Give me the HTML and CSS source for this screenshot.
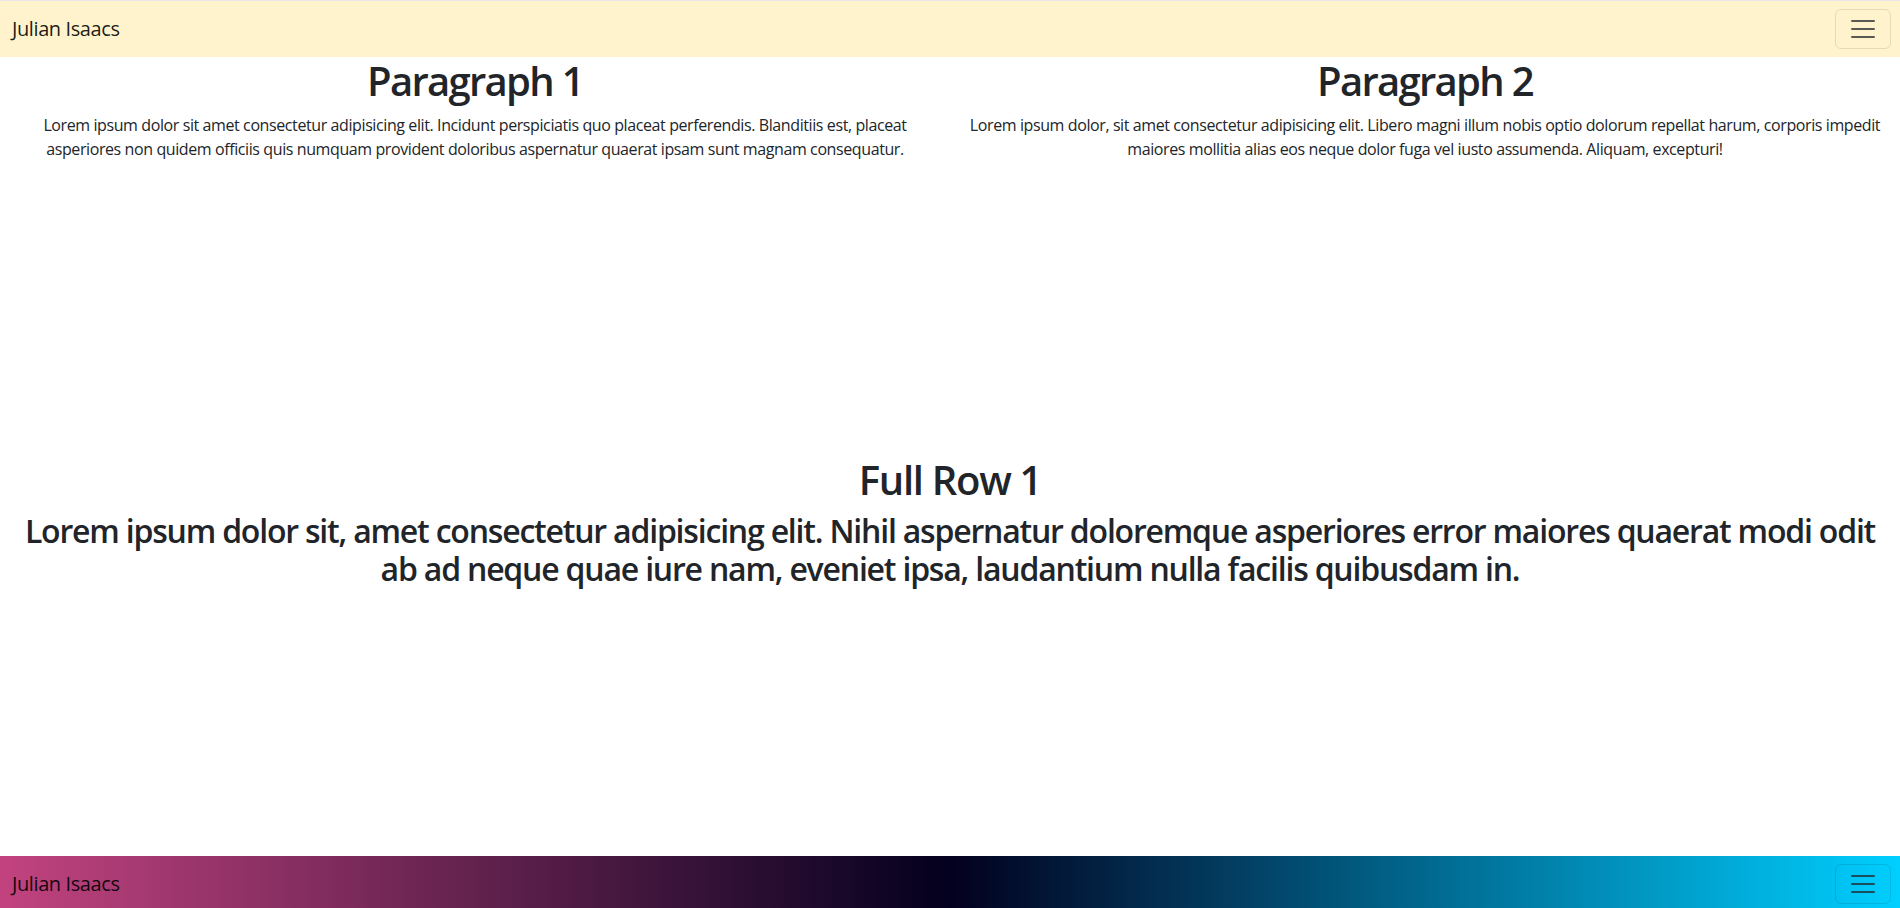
FILE: index.html
```html
<!DOCTYPE html>
<html lang="en">
<head>
<meta charset="utf-8">
<title>Julian Isaacs</title>
<link rel="stylesheet" href="styles.css">
</head>
<body>
<nav class="navbar navbar-top">
  <div class="nav-inner">
    <a class="brand" href="#">Julian Isaacs</a>
    <button class="toggler" type="button" aria-label="Toggle navigation">
      <svg class="toggler-icon" viewBox="0 0 30 30" width="30" height="30"><path d="M4 7h22M4 15h22M4 23h22"/></svg>
    </button>
  </div>
</nav>
<main class="main">
  <section class="row row-split">
    <div class="col">
      <h1 class="title">Paragraph 1</h1>
      <p class="text">Lorem ipsum dolor sit amet consectetur adipisicing elit. Incidunt perspiciatis quo placeat perferendis. Blanditiis est, placeat asperiores non quidem officiis quis numquam provident doloribus aspernatur quaerat ipsam sunt magnam consequatur.</p>
    </div>
    <div class="col">
      <h1 class="title">Paragraph 2</h1>
      <p class="text">Lorem ipsum dolor, sit amet consectetur adipisicing elit. Libero magni illum nobis optio dolorum repellat harum, corporis impedit maiores mollitia alias eos neque dolor fuga vel iusto assumenda. Aliquam, excepturi!</p>
    </div>
  </section>
  <section class="row row-full">
    <div class="col">
      <h1 class="title title-full">Full Row 1</h1>
      <h2 class="lead">Lorem ipsum dolor sit, amet consectetur adipisicing elit. Nihil aspernatur doloremque asperiores error maiores quaerat modi odit ab ad neque quae iure nam, eveniet ipsa, laudantium nulla facilis quibusdam in.</h2>
    </div>
  </section>
</main>
<nav class="navbar navbar-bottom">
  <div class="nav-inner">
    <a class="brand" href="#">Julian Isaacs</a>
    <button class="toggler" type="button" aria-label="Toggle navigation">
      <svg class="toggler-icon" viewBox="0 0 30 30" width="30" height="30"><path d="M4 7h22M4 15h22M4 23h22"/></svg>
    </button>
  </div>
</nav>
</body>
</html>
```
FILE: styles.css
```css
html, body {
  margin: 0;
  padding: 0;
  height: 908px;
  overflow: hidden;
}
body {
  font-family: "Open Sans", "Noto Sans", sans-serif;
  font-size: 16px;
  line-height: 1.5;
  color: #212529;
  background: #fff;
  border-top: 1px solid #ebe4ec;
}
.navbar {
  height: 56px;
  box-sizing: border-box;
  padding: 8px 0;
}
.navbar-top {
  background: #fff3cd;
}
.navbar-bottom {
  background: linear-gradient(to right, #c2437f 0%, #03001e 50%, #00cfff 100%);
}
.nav-inner {
  display: flex;
  align-items: center;
  justify-content: space-between;
  padding: 0 9px 0 12px;
  height: 40px;
}
.brand {
  font-size: 20px;
  line-height: 30px;
  padding: 5px 0;
  color: rgba(0, 0, 0, 0.9);
  text-decoration: none;
  letter-spacing: -0.4px;
}
.toggler {
  width: 56px;
  height: 40px;
  box-sizing: border-box;
  padding: 4px 12px;
  border: 1px solid rgba(0, 0, 0, 0.1);
  border-radius: 6px;
  background: transparent;
  display: flex;
  align-items: center;
  justify-content: center;
}
.toggler-icon {
  display: block;
  width: 30px;
  height: 30px;
}
.toggler-icon path {
  stroke: rgba(33, 37, 41, 0.75);
  stroke-width: 2;
  stroke-linecap: round;
  fill: none;
}
.main {
  display: flex;
  flex-direction: column;
  height: 799px;
}
.row {
  display: flex;
}
.row-split {
  height: 399px;
}
.row-full {
  height: 400px;
}
.col {
  flex: 1 1 0;
  padding: 0 12px;
  text-align: center;
  min-width: 0;
}
.title {
  font-size: 40px;
  font-weight: 600;
  line-height: 1.2;
  margin: 0 0 8px;
  letter-spacing: -1.7px;
}
.title-full {
  letter-spacing: -1.3px;
}
.text {
  margin: 0 0 16px;
  letter-spacing: -0.4px;
}
.lead {
  font-size: 32px;
  font-weight: 600;
  line-height: 1.2;
  margin: 0 0 8px;
  letter-spacing: -1.2px;
}
```
